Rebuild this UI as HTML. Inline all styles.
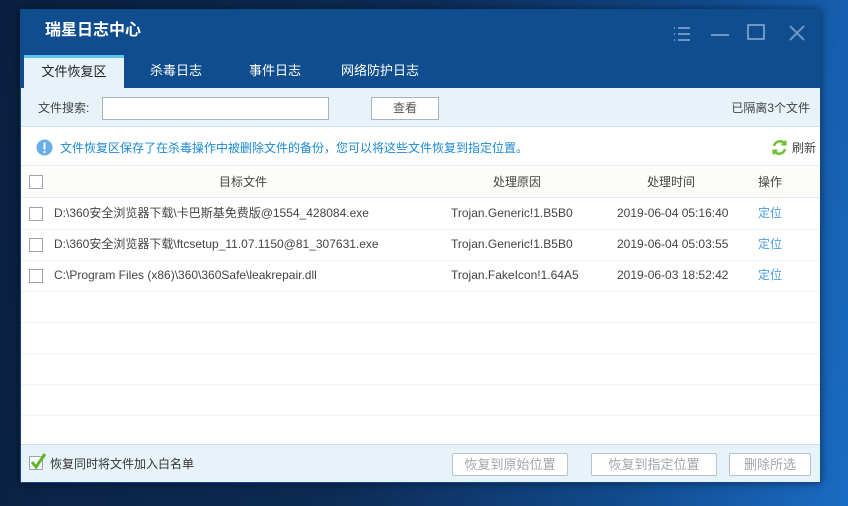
<!DOCTYPE html>
<html><head><meta charset="utf-8"><style>
*{margin:0;padding:0;box-sizing:border-box}
body{width:848px;height:506px;overflow:hidden;position:relative;font-family:"Liberation Sans","Noto Sans CJK SC",sans-serif;font-size:12px;color:#444;line-height:16px;
background:linear-gradient(100deg,#0a2040 0%,#0d2b55 45%,#114a8c 75%,#1a6cc4 100%)}
.a{position:absolute}
#win{left:20px;top:9px;width:801px;height:474px;background:#fff;border:1px solid #0e4a8e;box-shadow:0 0 8px rgba(0,0,0,.5)}
.title{left:0;top:0;width:799px;height:78px;background:#0f4d8f}
.tab{top:45px;height:33px;width:100px;text-align:center;line-height:31px;font-size:13px;color:#fff}
.cb{width:14px;height:14px;border:1px solid #9aa4ae;background:#fff}
.row{left:0;width:799px;height:31px;border-bottom:1px solid #edf3f8}
.btn{top:443px;height:23px;border:1px solid #b8c2cc;background:#fff;color:#a0a6ad;font-size:13px;text-align:center;line-height:21px;border-radius:2px}
</style></head><body>
<div id="win" class="a">
 <div class="a title">
  <div class="a" style="left:24px;top:10px;color:#fff;font-size:16px;font-weight:bold;line-height:22px">瑞星日志中心</div>
  <svg class="a" style="left:650px;top:14px" width="150" height="22">
   <g stroke="#6f95c3" stroke-width="2" fill="none">
    <path d="M3 4h1M7 4h12M3 10h1M7 10h12M3 16h1M7 16h12"/>
    <path d="M40 11h18"/>
    <rect x="77" y="1" width="16" height="14"/>
    <path d="M119 2l14 14M133 2l-14 14"/>
   </g>
  </svg>
  <div class="a tab" style="left:3px;background:#e8f3f9;color:#222;border-top:3px solid #5ec4ee;line-height:28px">文件恢复区</div>
  <div class="a tab" style="left:105px">杀毒日志</div>
  <div class="a tab" style="left:204px">事件日志</div>
  <div class="a tab" style="left:304px;width:110px">网络防护日志</div>
 </div>
 <div class="a" style="left:0;top:78px;width:799px;height:39px;background:#e8f3f9;border-bottom:1px solid #cfe3f3"></div>
 <div class="a" style="left:17px;top:90px;color:#444">文件搜索:</div>
 <div class="a" style="left:81px;top:87px;width:227px;height:23px;border:1px solid #aab4bd;background:#fff"></div>
 <div class="a" style="left:350px;top:87px;width:68px;height:23px;border:1px solid #aab4bd;background:#fff;text-align:center;line-height:21px;color:#555">查看</div>
 <div class="a" style="right:10px;top:90px;color:#444">已隔离3个文件</div>
 <svg class="a" style="left:15px;top:129px" width="17" height="17"><circle cx="8.5" cy="8.5" r="8" fill="#6aaee8"/><rect x="7.5" y="3.5" width="2" height="7" fill="#fff"/><rect x="7.5" y="12" width="2" height="2" fill="#fff"/></svg>
 <div class="a" style="left:39px;top:130px;color:#1a8ad4">文件恢复区保存了在杀毒操作中被删除文件的备份，您可以将这些文件恢复到指定位置。</div>
 <svg class="a" style="left:750px;top:129px" width="17" height="17" fill="none" stroke="#6cc02a" stroke-width="2.4"><path d="M3 7a6 6 0 0 1 10.5-2.5"/><path d="M14 10a6 6 0 0 1-10.5 2.5"/><path d="M14.5 1.5v4h-4" stroke-width="2"/><path d="M2.5 15.5v-4h4" stroke-width="2"/></svg>
 <div class="a" style="left:771px;top:130px;color:#444">刷新</div>
 <div class="a" style="left:0;top:155px;width:799px;height:33px;background:#fcfcf8;border-top:1px solid #e3eaef;border-bottom:1px solid #e3eaef"></div>
 <div class="a cb" style="left:8px;top:165px"></div>
 <div class="a" style="left:198px;top:164px">目标文件</div>
 <div class="a" style="left:472px;top:164px">处理原因</div>
 <div class="a" style="left:626px;top:164px">处理时间</div>
 <div class="a" style="left:737px;top:164px">操作</div>

 <div class="a row" style="top:189px"></div>
 <div class="a row" style="top:220px"></div>
 <div class="a row" style="top:251px"></div>
 <div class="a row" style="top:282px"></div>
 <div class="a row" style="top:313px"></div>
 <div class="a row" style="top:344px"></div>
 <div class="a row" style="top:375px"></div>

 <div class="a cb" style="left:8px;top:197px"></div>
 <div class="a" style="left:33px;top:195px">D:\360安全浏览器下载\卡巴斯基免费版@1554_428084.exe</div>
 <div class="a" style="left:430px;top:195px">Trojan.Generic!1.B5B0</div>
 <div class="a" style="left:596px;top:195px">2019-06-04 05:16:40</div>
 <div class="a" style="left:737px;top:195px;color:#4a9ee0">定位</div>

 <div class="a cb" style="left:8px;top:228px"></div>
 <div class="a" style="left:33px;top:226px">D:\360安全浏览器下载\ftcsetup_11.07.1150@81_307631.exe</div>
 <div class="a" style="left:430px;top:226px">Trojan.Generic!1.B5B0</div>
 <div class="a" style="left:596px;top:226px">2019-06-04 05:03:55</div>
 <div class="a" style="left:737px;top:226px;color:#4a9ee0">定位</div>

 <div class="a cb" style="left:8px;top:259px"></div>
 <div class="a" style="left:33px;top:257px">C:\Program Files (x86)\360\360Safe\leakrepair.dll</div>
 <div class="a" style="left:430px;top:257px">Trojan.FakeIcon!1.64A5</div>
 <div class="a" style="left:596px;top:257px">2019-06-03 18:52:42</div>
 <div class="a" style="left:737px;top:257px;color:#4a9ee0">定位</div>

 <div class="a" style="left:0;top:434px;width:799px;height:38px;background:#e8f3f9;border-top:1px solid #cfdde8"></div>
 <div class="a cb" style="left:8px;top:446px"></div>
 <svg class="a" style="left:8px;top:442px" width="18" height="18"><path d="M3 10l4 5 9-13" stroke="#5fb524" stroke-width="3" fill="none"/></svg>
 <div class="a" style="left:29px;top:446px;color:#333">恢复同时将文件加入白名单</div>
 <div class="a btn" style="left:431px;width:116px">恢复到原始位置</div>
 <div class="a btn" style="left:570px;width:126px">恢复到指定位置</div>
 <div class="a btn" style="left:708px;width:82px">删除所选</div>
</div>
</body></html>
